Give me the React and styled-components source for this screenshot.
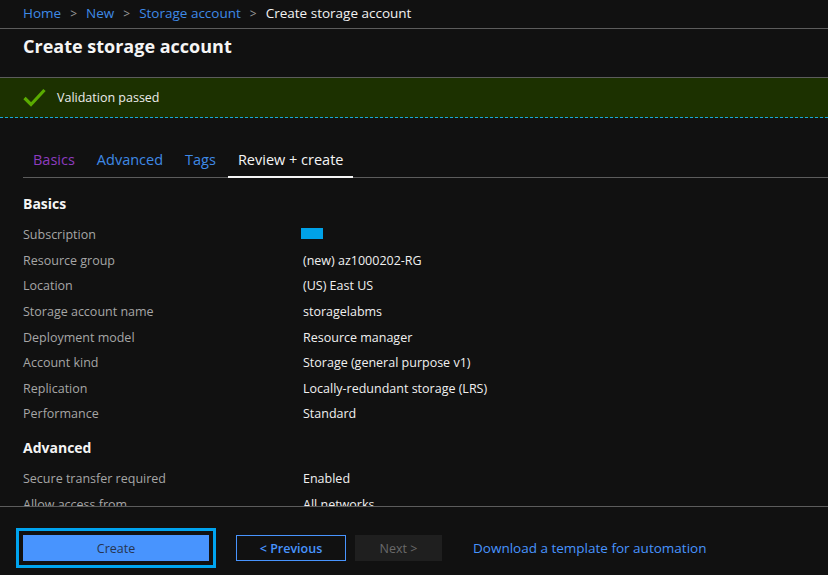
import React from "react";
import styled, { createGlobalStyle } from "styled-components";

const Global = createGlobalStyle`
  html, body { margin: 0; padding: 0; background: #111111; }
  body { font-family: "Segoe UI", "Open Sans", "Noto Sans", sans-serif; color: #f0f0f0; }
  * { box-sizing: border-box; }
`;

const Page = styled.div`
  width: 828px;
  height: 575px;
  background: #111111;
  display: flex;
  flex-direction: column;
  overflow: hidden;
`;

const Breadcrumb = styled.nav`
  height: 29px;
  padding: 0 0 0 23px;
  display: flex;
  align-items: center;
  gap: 9px;
  font-size: 13.5px;
  border-bottom: 1px solid #5c5c5c;
  padding-bottom: 2px;
`;

const Crumb = styled.a`
  color: ${(p) => (p.$current ? "#f2f2f2" : "#3f8ae6")};
  text-decoration: none;
`;

const Chevron = styled.span`
  color: #9a9a9a;
  font-size: 12px;
`;

const Header = styled.header`
  height: 48px;
  padding: 5px 23px 0;
`;

const Title = styled.h1`
  margin: 0;
  font-size: 18px;
  font-weight: 700;
  color: #f5f5f5;
`;

const Banner = styled.div`
  height: 41px;
  border-top: 1px solid #5c5c5c;
  border-bottom: 1px dashed #1aa6d8;
  background: #1c3100;
  display: flex;
  align-items: center;
  gap: 11px;
  padding: 0 0 0 23px;
  font-size: 12.5px;
  color: #ececec;
`;

const Scroll = styled.div`
  flex: 1;
  overflow: hidden;
  padding: 28px 0 0 23px;
`;

const Tabs = styled.div`
  display: flex;
  gap: 2px;
  border-bottom: 1px solid #5c5c5c;
`;

const Tab = styled.a`
  padding: 4px 10px 7px;
  font-size: 14.5px;
  line-height: 19px;
  color: ${(p) => p.$color};
  border-bottom: 2px solid ${(p) => (p.$active ? "#f5f5f5" : "transparent")};
  margin-bottom: -1px;
  text-decoration: none;
`;

const SectionTitle = styled.h2`
  margin: ${(p) => (p.$first ? "16px" : "11px")} 0 8px;
  font-size: 14px;
  font-weight: 700;
  color: #f5f5f5;
  height: 20px;
  line-height: 20px;
`;

const Row = styled.div`
  display: grid;
  grid-template-columns: 280px 1fr;
  height: 25.6px;
  align-items: center;
  font-size: 12.5px;
`;

const Label = styled.span`
  color: #a6a6a6;
`;

const Value = styled.span`
  color: #f0f0f0;
`;

const Swatch = styled.span`
  display: inline-block;
  width: 22px;
  height: 11px;
  margin-left: -2px;
  background: #00a2e8;
`;

const Footer = styled.footer`
  height: 69px;
  border-top: 1px solid #5c5c5c;
  display: flex;
  align-items: center;
  padding: 14px 0 0 23px;
  font-size: 12.5px;
`;

const PrimaryButton = styled.button`
  width: 186px;
  height: 26px;
  background: #4894fe;
  color: #27354f;
  border: none;
  font: inherit;
  outline: 3px solid #00a4ef;
  outline-offset: 4px;
  margin-right: 27px;
`;

const OutlineButton = styled.button`
  width: 110px;
  height: 26px;
  background: transparent;
  color: #4894fe;
  border: 1px solid #4894fe;
  font: inherit;
  font-weight: 600;
  margin-right: 9px;
`;

const DisabledButton = styled.button`
  width: 87px;
  height: 26px;
  background: #1f1f1f;
  color: #6a6a6a;
  border: none;
  font: inherit;
  margin-right: 31px;
`;

const Link = styled.a`
  color: #4894fe;
  font-size: 13.5px;
  text-decoration: none;
`;

const Check = () => (
  <svg width="23" height="19" viewBox="0 0 23 19">
    <path d="M1.5 10 L8 16.5 L21.5 2" fill="none" stroke="#5aab00" strokeWidth="3.2" />
  </svg>
);

const basics = [
  ["Subscription", null],
  ["Resource group", "(new) az1000202-RG"],
  ["Location", "(US) East US"],
  ["Storage account name", "storagelabms"],
  ["Deployment model", "Resource manager"],
  ["Account kind", "Storage (general purpose v1)"],
  ["Replication", "Locally-redundant storage (LRS)"],
  ["Performance", "Standard"],
];

const advanced = [
  ["Secure transfer required", "Enabled"],
  ["Allow access from", "All networks"],
  ["Hierarchical namespace", "Disabled"],
];

export default function App() {
  return (
    <>
      <Global />
      <Page>
        <Breadcrumb>
          <Crumb>Home</Crumb>
          <Chevron>&gt;</Chevron>
          <Crumb>New</Crumb>
          <Chevron>&gt;</Chevron>
          <Crumb>Storage account</Crumb>
          <Chevron>&gt;</Chevron>
          <Crumb $current>Create storage account</Crumb>
        </Breadcrumb>
        <Header>
          <Title>Create storage account</Title>
        </Header>
        <Banner>
          <Check />
          <span>Validation passed</span>
        </Banner>
        <Scroll>
          <Tabs>
            <Tab $color="#8d3cbf">Basics</Tab>
            <Tab $color="#3f8ae6">Advanced</Tab>
            <Tab $color="#3f8ae6">Tags</Tab>
            <Tab $color="#f5f5f5" $active>Review + create</Tab>
          </Tabs>
          <SectionTitle $first>Basics</SectionTitle>
          {basics.map(([l, v]) => (
            <Row key={l}>
              <Label>{l}</Label>
              <Value>{v === null ? <Swatch /> : v}</Value>
            </Row>
          ))}
          <SectionTitle>Advanced</SectionTitle>
          {advanced.map(([l, v]) => (
            <Row key={l}>
              <Label>{l}</Label>
              <Value>{v}</Value>
            </Row>
          ))}
        </Scroll>
        <Footer>
          <PrimaryButton>Create</PrimaryButton>
          <OutlineButton>&lt; Previous</OutlineButton>
          <DisabledButton>Next &gt;</DisabledButton>
          <Link>Download a template for automation</Link>
        </Footer>
      </Page>
    </>
  );
}
